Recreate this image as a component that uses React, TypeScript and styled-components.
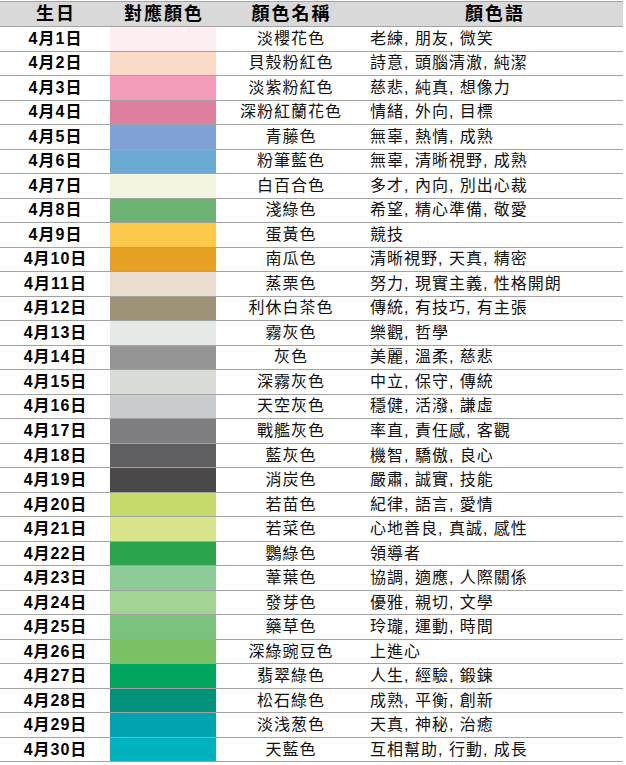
import React from "react";
import styled, { createGlobalStyle } from "styled-components";

const Global = createGlobalStyle`
  html, body { margin: 0; padding: 0; background: #ffffff; }
  body { font-family: "Liberation Sans", "Noto Sans CJK TC", Arial, sans-serif; color: #111; }
`;

type Row = { date: string; color: string; name: string; words: string };

const rows: Row[] = [
  { date: "4月1日", color: "#FDEEF1", name: "淡櫻花色", words: "老練, 朋友, 微笑" },
  { date: "4月2日", color: "#FADBC7", name: "貝殼粉紅色", words: "詩意, 頭腦清澈, 純潔" },
  { date: "4月3日", color: "#F29CBA", name: "淡紫粉紅色", words: "慈悲, 純真, 想像力" },
  { date: "4月4日", color: "#DE7FA0", name: "深粉紅蘭花色", words: "情緒, 外向, 目標" },
  { date: "4月5日", color: "#80A0D6", name: "青藤色", words: "無辜, 熱情, 成熟" },
  { date: "4月6日", color: "#6AAAD3", name: "粉筆藍色", words: "無辜, 清晰視野, 成熟" },
  { date: "4月7日", color: "#F3F5E1", name: "白百合色", words: "多才, 內向, 別出心裁" },
  { date: "4月8日", color: "#6BB273", name: "淺綠色", words: "希望, 精心準備, 敬愛" },
  { date: "4月9日", color: "#FDC94B", name: "蛋黃色", words: "競技" },
  { date: "4月10日", color: "#E6A125", name: "南瓜色", words: "清晰視野, 天真, 精密" },
  { date: "4月11日", color: "#EBDED1", name: "蒸栗色", words: "努力, 現實主義, 性格開朗" },
  { date: "4月12日", color: "#9E9277", name: "利休白茶色", words: "傳統, 有技巧, 有主張" },
  { date: "4月13日", color: "#E5EAE6", name: "霧灰色", words: "樂觀, 哲學" },
  { date: "4月14日", color: "#959595", name: "灰色", words: "美麗, 溫柔, 慈悲" },
  { date: "4月15日", color: "#D8DBD6", name: "深霧灰色", words: "中立, 保守, 傳統" },
  { date: "4月16日", color: "#C9CCCF", name: "天空灰色", words: "穩健, 活潑, 謙虛" },
  { date: "4月17日", color: "#7E7E80", name: "戰艦灰色", words: "率直, 責任感, 客觀" },
  { date: "4月18日", color: "#5F5E61", name: "藍灰色", words: "機智, 驕傲, 良心" },
  { date: "4月19日", color: "#4B4849", name: "消炭色", words: "嚴肅, 誠實, 技能" },
  { date: "4月20日", color: "#C6D96B", name: "若苗色", words: "紀律, 語言, 愛情" },
  { date: "4月21日", color: "#D8E38B", name: "若菜色", words: "心地善良, 真誠, 感性" },
  { date: "4月22日", color: "#2BA44B", name: "鸚綠色", words: "領導者" },
  { date: "4月23日", color: "#8DCB98", name: "葦葉色", words: "協調, 適應, 人際關係" },
  { date: "4月24日", color: "#A3D494", name: "發芽色", words: "優雅, 親切, 文學" },
  { date: "4月25日", color: "#7CC27F", name: "藥草色", words: "玲瓏, 運動, 時間" },
  { date: "4月26日", color: "#7BC064", name: "深綠豌豆色", words: "上進心" },
  { date: "4月27日", color: "#00A55E", name: "翡翠綠色", words: "人生, 經驗, 鍛鍊" },
  { date: "4月28日", color: "#00937A", name: "松石綠色", words: "成熟, 平衡, 創新" },
  { date: "4月29日", color: "#00A3AF", name: "淡浅葱色", words: "天真, 神秘, 治癒" },
  { date: "4月30日", color: "#00B1BE", name: "天藍色", words: "互相幫助, 行動, 成長" },
];

const Table = styled.div`
  width: 623px;
  margin-top: 1px;
  border-top: 1px solid #a3a3a3;
`;

const Grid = styled.div<{ $header?: boolean }>`
  display: grid;
  grid-template-columns: 110px 106px 149px 1fr;
  box-sizing: border-box;
  height: ${(p) => (p.$header ? "25px" : "24.53px")};
  border-bottom: 1px solid #a3a3a3;
  background: ${(p) => (p.$header ? "#d9d9d9" : "#ffffff")};
`;

const HeadCell = styled.div`
  display: flex;
  align-items: center;
  justify-content: center;
  font-size: 18px;
  font-weight: 700;
  letter-spacing: 2px;
  padding-left: 2px;
  color: #000;
  line-height: 1;
`;

const DateCell = styled.div`
  display: flex;
  align-items: center;
  justify-content: center;
  font-size: 16px;
  font-weight: 700;
  letter-spacing: 1px;
  padding-left: 1px;
  color: #000;
  line-height: 1;
`;

const Swatch = styled.div`
  height: 100%;
`;

const NameCell = styled.div`
  display: flex;
  align-items: center;
  justify-content: center;
  font-size: 16px;
  letter-spacing: 1px;
  padding-left: 1px;
  color: #111;
  line-height: 1;
  white-space: nowrap;
`;

const WordsCell = styled.div`
  display: flex;
  align-items: center;
  padding-left: 5px;
  font-size: 16px;
  letter-spacing: 1px;
  color: #111;
  line-height: 1;
  white-space: nowrap;
`;

export default function App() {
  return (
    <>
      <Global />
      <Table>
        <Grid $header>
          <HeadCell>生日</HeadCell>
          <HeadCell>對應顏色</HeadCell>
          <HeadCell>顏色名稱</HeadCell>
          <HeadCell>顏色語</HeadCell>
        </Grid>
        {rows.map((r) => (
          <Grid key={r.date}>
            <DateCell>{r.date}</DateCell>
            <Swatch style={{ background: r.color }} />
            <NameCell>{r.name}</NameCell>
            <WordsCell>{r.words}</WordsCell>
          </Grid>
        ))}
      </Table>
    </>
  );
}
